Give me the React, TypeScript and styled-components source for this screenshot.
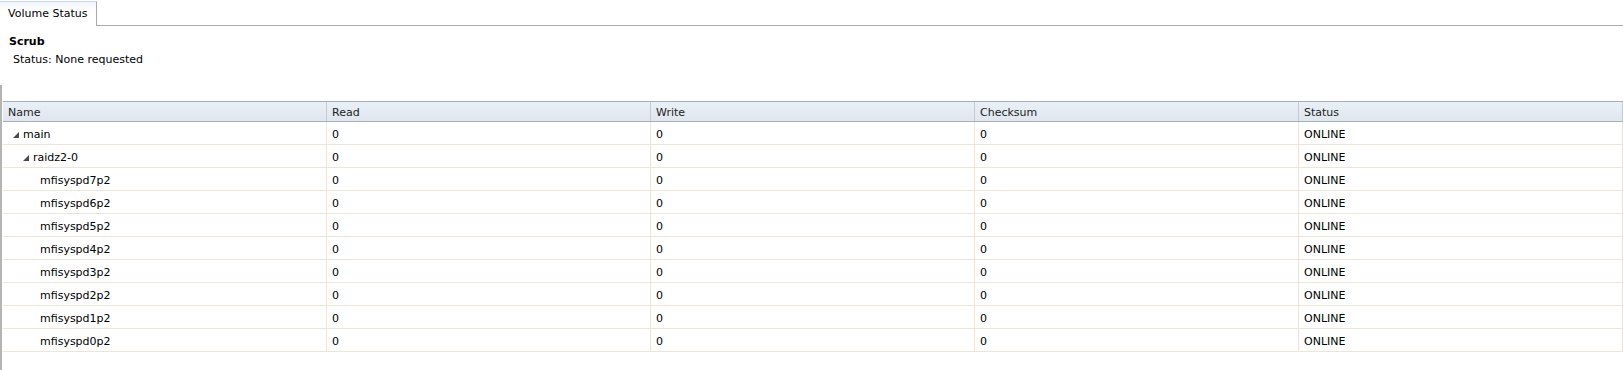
import styled, { createGlobalStyle } from 'styled-components';

const GlobalStyle = createGlobalStyle`
  html, body {
    margin: 0;
    padding: 0;
    background: #fff;
  }

  body {
    font-family: 'DejaVu Sans', Verdana, sans-serif;
    font-size: 11px;
    color: #000;
  }
`;

const Page = styled.div`
  width: 1623px;
  height: 370px;
  overflow: hidden;
  display: flex;
  flex-direction: column;
`;

const TabStrip = styled.div`
  height: 25px;
  display: flex;
  align-items: flex-end;
  border-bottom: 1px solid #a9a9a9;
`;

const Tab = styled.div`
  width: 88px;
  height: 24px;
  margin-bottom: -1px;
  padding-left: 8px;
  line-height: 24px;
  border: 1px solid #a9a9a9;
  border-top: 1px solid #c9d9ec;
  border-bottom: none;
  border-left: none;
  background: linear-gradient(#f1f5fa, #fff 40%);
  white-space: nowrap;
`;

const Summary = styled.div`
  display: flex;
  flex-direction: column;
  padding: 8px 0 0 9px;
  height: 51px;

  .title {
    font-weight: bold;
    line-height: 15px;
  }

  .status {
    margin-top: 4px;
    padding-left: 4px;
    line-height: 14px;
  }
`;

const GridPanel = styled.div`
  flex: 1;
  padding: 16px 0 0 1px;
  border-left: 2px solid #b4b4b4;
`;

const Row = styled.div<{ $header?: boolean }>`
  display: grid;
  grid-template-columns: repeat(5, 324px);
  height: ${(p) => (p.$header ? '19px' : '22px')};
  line-height: ${(p) => (p.$header ? '19px' : '22px')};
  border-top: ${(p) => (p.$header ? '1px solid #a5afba' : 'none')};
  border-bottom: 1px solid ${(p) => (p.$header ? '#a5afba' : '#ede5d7')};
  background: ${(p) => (p.$header ? 'linear-gradient(#eaf0f7, #dfe6ee)' : '#fff')};
  color: ${(p) => (p.$header ? '#222' : '#000')};
`;

const Cell = styled.div<{ $header?: boolean; $level?: number }>`
  display: flex;
  align-items: center;
  gap: 4px;
  padding-left: ${(p) => (p.$level === undefined ? 5 : 10 + p.$level * 10)}px;
  padding-top: ${(p) => (p.$header ? 1 : 3)}px;
  border-right: 1px solid ${(p) => (p.$header ? '#c3ccd6' : '#ede5d7')};
  white-space: nowrap;
  overflow: hidden;
`;

const Arrow = () => (
  <svg width="6" height="6" viewBox="0 0 6 6">
    <polygon points="6,0 6,6 0,6" fill="#4a4a4a" />
  </svg>
);

const Spacer = styled.span`
  width: 3px;
  flex: none;
`;

const rows = [
  { name: 'main', level: 0, expanded: true },
  { name: 'raidz2-0', level: 1, expanded: true },
  ...[7, 6, 5, 4, 3, 2, 1, 0].map((n) => ({
    name: `mfisyspd${n}p2`,
    level: 2,
    expanded: false,
  })),
];

const columns = ['Name', 'Read', 'Write', 'Checksum', 'Status'];

export default function App() {
  return (
    <Page>
      <GlobalStyle />
      <TabStrip>
        <Tab>Volume Status</Tab>
      </TabStrip>

      <Summary>
        <div className="title">Scrub</div>
        <div className="status">Status: None requested</div>
      </Summary>

      <GridPanel>
        <Row $header>
          {columns.map((c) => (
            <Cell $header key={c}>
              {c}
            </Cell>
          ))}
        </Row>
        {rows.map((r) => (
          <Row key={r.name}>
            <Cell $level={r.level}>
              {r.expanded ? <Arrow /> : <Spacer />}
              {r.name}
            </Cell>
            <Cell>0</Cell>
            <Cell>0</Cell>
            <Cell>0</Cell>
            <Cell>ONLINE</Cell>
          </Row>
        ))}
      </GridPanel>
    </Page>
  );
}
